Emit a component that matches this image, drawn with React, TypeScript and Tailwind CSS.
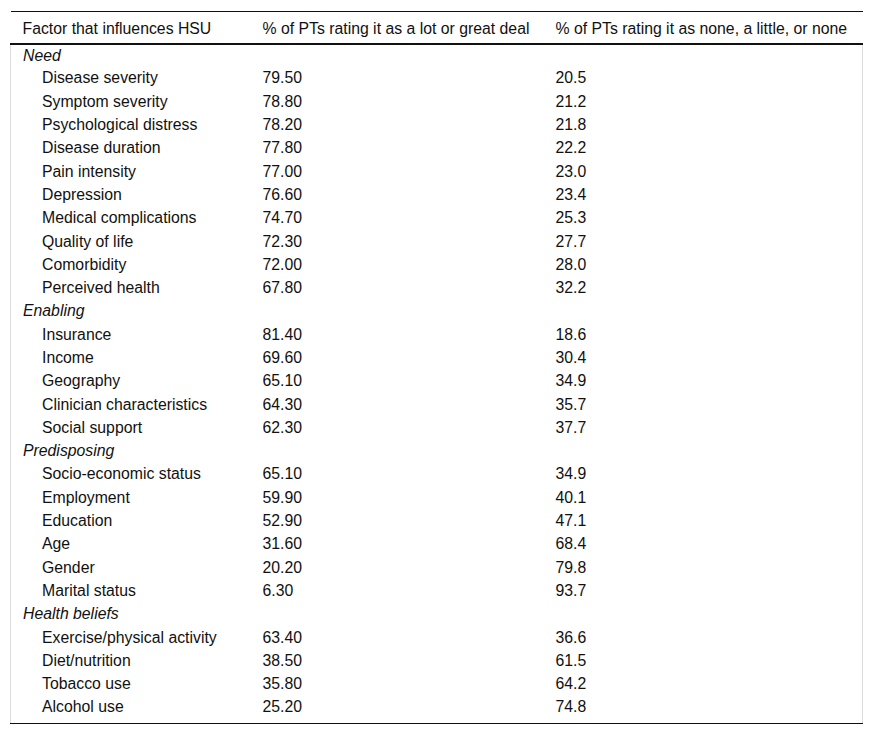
import React from 'react';

type Row = { name: string; hi: string; lo: string };
type Group = { title: string; rows: Row[] };

const groups: Group[] = [
  {
    title: 'Need',
    rows: [
      { name: 'Disease severity', hi: '79.50', lo: '20.5' },
      { name: 'Symptom severity', hi: '78.80', lo: '21.2' },
      { name: 'Psychological distress', hi: '78.20', lo: '21.8' },
      { name: 'Disease duration', hi: '77.80', lo: '22.2' },
      { name: 'Pain intensity', hi: '77.00', lo: '23.0' },
      { name: 'Depression', hi: '76.60', lo: '23.4' },
      { name: 'Medical complications', hi: '74.70', lo: '25.3' },
      { name: 'Quality of life', hi: '72.30', lo: '27.7' },
      { name: 'Comorbidity', hi: '72.00', lo: '28.0' },
      { name: 'Perceived health', hi: '67.80', lo: '32.2' },
    ],
  },
  {
    title: 'Enabling',
    rows: [
      { name: 'Insurance', hi: '81.40', lo: '18.6' },
      { name: 'Income', hi: '69.60', lo: '30.4' },
      { name: 'Geography', hi: '65.10', lo: '34.9' },
      { name: 'Clinician characteristics', hi: '64.30', lo: '35.7' },
      { name: 'Social support', hi: '62.30', lo: '37.7' },
    ],
  },
  {
    title: 'Predisposing',
    rows: [
      { name: 'Socio-economic status', hi: '65.10', lo: '34.9' },
      { name: 'Employment', hi: '59.90', lo: '40.1' },
      { name: 'Education', hi: '52.90', lo: '47.1' },
      { name: 'Age', hi: '31.60', lo: '68.4' },
      { name: 'Gender', hi: '20.20', lo: '79.8' },
      { name: 'Marital status', hi: '6.30', lo: '93.7' },
    ],
  },
  {
    title: 'Health beliefs',
    rows: [
      { name: 'Exercise/physical activity', hi: '63.40', lo: '36.6' },
      { name: 'Diet/nutrition', hi: '38.50', lo: '61.5' },
      { name: 'Tobacco use', hi: '35.80', lo: '64.2' },
      { name: 'Alcohol use', hi: '25.20', lo: '74.8' },
    ],
  },
];

export default function App() {
  return (
    <div className="min-h-screen bg-white pt-[11px] pl-[10px] font-['Liberation_Sans',Arial,sans-serif] text-[15.8px] text-[#111]">
      <table className="w-[853px] border-collapse table-fixed">
        <colgroup>
          <col className="w-[241px]" />
          <col className="w-[293px]" />
          <col />
        </colgroup>
        <thead>
          <tr className="h-[32px] border-t border-t-[#111] border-b-2 border-b-[#111]">
            <th className="pl-[12px] pt-[3px] text-left font-normal">Factor that influences HSU</th>
            <th className="pl-[11px] pt-[3px] text-left font-normal">% of PTs rating it as a lot or great deal</th>
            <th className="pl-[11px] pt-[3px] text-left font-normal">% of PTs rating it as none, a little, or none</th>
          </tr>
        </thead>
        <tbody className="border-x border-x-[#dcdcdc] border-b border-b-[#111]">
          {groups.map((g) => (
            <React.Fragment key={g.title}>
              <tr className="h-[23.3px]">
                <td colSpan={3} className="pl-[12px] italic leading-[18px]">{g.title}</td>
              </tr>
              {g.rows.map((r) => (
                <tr key={r.name} className="h-[23.3px]">
                  <td className="pl-[31px] leading-[18px]">{r.name}</td>
                  <td className="pl-[11px] leading-[18px]">{r.hi}</td>
                  <td className="pl-[11px] leading-[18px]">{r.lo}</td>
                </tr>
              ))}
            </React.Fragment>
          ))}
          <tr className="h-[4px]">
            <td colSpan={3} />
          </tr>
        </tbody>
      </table>
    </div>
  );
}
